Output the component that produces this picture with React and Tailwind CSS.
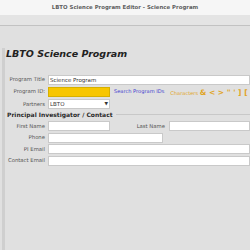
import React from "react";

const Label = ({ children, w = "w-[39px]" }) => (
  <div className={`${w} shrink-0 text-right text-[5.3px] leading-none text-[#555] whitespace-nowrap`}>{children}</div>
);

const Field = ({ className = "" }) => (
  <div className={`h-[10px] bg-white border border-[#c9c9c9] ${className}`} />
);

const App = () => {
  return (
    <div className="w-[250px] h-[250px] overflow-hidden bg-[#e0e0e0] font-['DejaVu_Sans',sans-serif] flex flex-col">
      <div className="h-[15px] shrink-0 bg-[#f6f6f6] flex items-center justify-center text-[5.4px] font-bold text-[#606060]">
        LBTO Science Program Editor - Science Program
      </div>
      <div className="h-[11px] shrink-0 bg-[#e4e4e4] border-b border-[#c2c2c2]" />
      <div className="flex-1 flex pt-[22px]">
        <div className="w-[2px] shrink-0" />
        <div className="flex-1 min-w-0 border-l-[3px] border-[#cfcfcf] pl-[1px] flex flex-col">
          <div className="h-[12px] flex items-center text-[9.5px] font-bold italic text-[#222] whitespace-nowrap">
            LBTO Science Program
          </div>
          <div className="mt-[15px] flex flex-col gap-[1.5px]">
            <div className="flex items-center gap-[3px]">
              <Label>Program Title</Label>
              <div className="flex-1 h-[10px] bg-white border border-[#c9c9c9] flex items-center pl-[1px] text-[5.5px] text-[#333]">
                Science Program
              </div>
            </div>
            <div className="flex items-center gap-[3px] overflow-hidden">
              <Label>Program ID:</Label>
              <div className="w-[62px] shrink-0 h-[10px] bg-[#f7c600] border border-[#d6b000]" />
              <div className="ml-[1px] shrink-0 text-[5.1px] text-[#3c3ccf] whitespace-nowrap">Search Program IDs</div>
              <div className="ml-[3px] shrink-0 text-[5.1px] text-[#e0a423] whitespace-nowrap">
                Characters <span className="text-[7.5px] font-bold">&amp; &lt; &gt; " ' ] [ </span>a
              </div>
            </div>
            <div className="flex items-center gap-[3px]">
              <Label>Partners</Label>
              <div className="w-[62px] h-[10px] bg-white border border-[#c9c9c9] flex items-center justify-between px-[1px] text-[5.5px] text-[#333]">
                <span>LBTO</span>
                <span className="text-[4.5px]">▼</span>
              </div>
            </div>
          </div>
          <div className="mt-[1px] flex items-center">
            <div className="text-[6px] font-bold text-[#2a2a2a] whitespace-nowrap pl-[1px]">Principal Investigator / Contact</div>
            <div className="flex-1 ml-[3px] border-t border-[#c8c8c8]" />
          </div>
          <div className="mt-[2px] flex flex-col gap-[1.5px]">
            <div className="flex items-center gap-[3px]">
              <Label>First Name</Label>
              <Field className="w-[62px]" />
              <Label w="w-[52px]">Last Name</Label>
              <Field className="flex-1 ml-[1px]" />
            </div>
            <div className="flex items-center gap-[3px]">
              <Label>Phone</Label>
              <Field className="w-[115px]" />
            </div>
            <div className="flex items-center gap-[3px]">
              <Label>PI Email</Label>
              <Field className="flex-1" />
            </div>
            <div className="flex items-center gap-[3px]">
              <Label>Contact Email</Label>
              <Field className="flex-1" />
            </div>
          </div>
        </div>
      </div>
    </div>
  );
};

export default App;
